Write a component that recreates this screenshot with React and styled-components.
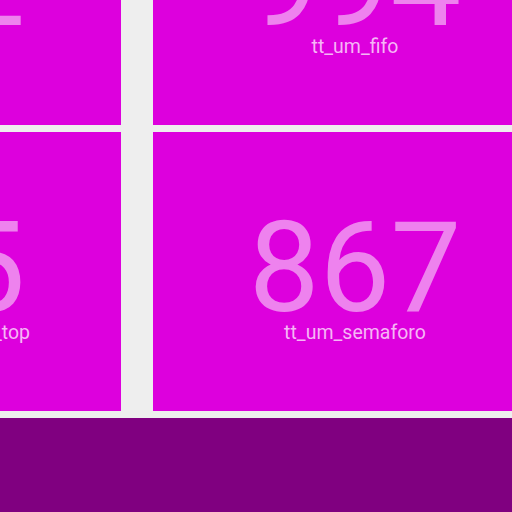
import React from 'react';
import styled, { createGlobalStyle } from 'styled-components';

const GlobalStyle = createGlobalStyle`
  html, body {
    margin: 0;
    padding: 0;
    background: #eeeeee;
    font-family: Roboto, "Noto Sans", sans-serif;
  }
`;

const Page = styled.div`
  width: 512px;
  height: 512px;
  overflow: hidden;
  background: #eeeeee;
`;

const Grid = styled.div`
  display: grid;
  grid-template-columns: 404px 404px;
  grid-auto-rows: 279px;
  column-gap: 32px;
  row-gap: 7px;
  margin: -154px 0 0 -283px;
`;

const Tile = styled.div`
  box-sizing: border-box;
  padding-top: 4px;
  background: #dd00dd;
  display: flex;
  flex-direction: column;
  align-items: center;
  justify-content: center;
`;

const Count = styled.div`
  font-size: 126px;
  line-height: 1;
  color: #ee82ee;
`;

const Name = styled.div`
  font-size: 19.5px;
  line-height: 1;
  margin-top: -8px;
  color: #f6b6f6;
`;

const Footer = styled.div`
  margin-top: 7px;
  height: 94px;
  background: #800080;
`;

const tiles = [
  { count: 312, name: 'tt_um_adder' },
  { count: 994, name: 'tt_um_fifo' },
  { count: 425, name: 'tt_um_vga_clock_gen_top' },
  { count: 867, name: 'tt_um_semaforo' },
];

export default function App() {
  return (
    <Page>
      <GlobalStyle />
      <Grid>
        {tiles.map((t) => (
          <Tile key={t.name}>
            <Count>{t.count}</Count>
            <Name>{t.name}</Name>
          </Tile>
        ))}
      </Grid>
      <Footer />
    </Page>
  );
}
